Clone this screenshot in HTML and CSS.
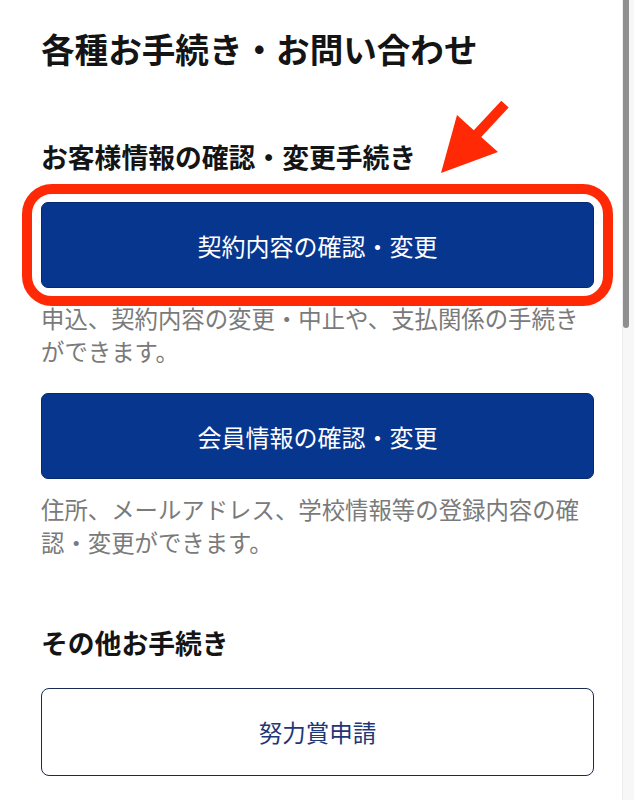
FILE: index.html
```html
<!DOCTYPE html>
<html lang="ja">
<head>
<meta charset="utf-8">
<title>各種お手続き・お問い合わせ</title>
<link rel="stylesheet" href="styles.css">
</head>
<body>
<div class="page">
  <main class="content">
    <h1 class="title">各種お手続き・お問い合わせ</h1>

    <section class="group">
      <h2 class="heading">お客様情報の確認・変更手続き</h2>
      <div class="item">
        <a class="btn btn-primary btn-marked" href="#">契約内容の確認・変更
          <svg class="arrow" width="90" height="100" viewBox="0 0 90 100" aria-hidden="true">
            <polygon points="0,72 16,14 32.8,29.2 60.3,-0.3 67.7,6.4 40.2,35.9 57,51" fill="#ff2a05"/>
          </svg>
        </a>
        <p class="desc">申込、契約内容の変更・中止や、支払関係の手続きができます。</p>
      </div>
      <div class="item">
        <a class="btn btn-primary" href="#">会員情報の確認・変更</a>
        <p class="desc">住所、メールアドレス、学校情報等の登録内容の確認・変更ができます。</p>
      </div>
    </section>

    <section class="group group-other">
      <h2 class="heading">その他お手続き</h2>
      <div class="item">
        <a class="btn btn-outline" href="#">努力賞申請</a>
      </div>
    </section>
  </main>
  <div class="scrollbar"><div class="thumb"></div></div>
</div>
</body>
</html>
```

FILE: styles.css
```css
html, body {
  margin: 0;
  padding: 0;
  height: 100%;
  overflow: hidden;
  background: #ffffff;
}

body {
  font-family: "Noto Sans CJK JP", "Noto Sans", sans-serif;
  color: #141414;
}

.page {
  display: flex;
  min-height: 800px;
}

.content {
  flex: 1;
  padding: 27px 28px 0 41px;
}

.title {
  margin: 0;
  font-size: 33.6px;
  line-height: 44px;
  font-weight: 700;
  letter-spacing: 0;
}

.group {
  display: flex;
  flex-direction: column;
}

.heading {
  margin: 68px 0 0;
  font-size: 26.8px;
  line-height: 36px;
  font-weight: 700;
}

.group-other .heading {
  margin-top: 66px;
}

.item {
  display: flex;
  flex-direction: column;
}

.group .item:first-of-type {
  margin-top: 27px;
}

.item + .item {
  margin-top: 25px;
}

.btn {
  position: relative;
  display: flex;
  align-items: center;
  justify-content: center;
  box-sizing: border-box;
  height: 86px;
  border-radius: 7px;
  font-size: 24px;
  text-decoration: none;
}

.btn-primary {
  background: #07368f;
  border: 1px solid #062a70;
  color: #ffffff;
}

.btn-outline {
  height: 88px;
  background: #ffffff;
  border: 1.5px solid #1b2a55;
  border-radius: 8px;
  color: #1e3778;
  font-size: 23.5px;
}

.btn-marked::after {
  content: "";
  position: absolute;
  left: -20px;
  right: -20px;
  top: -19px;
  bottom: -19px;
  border: 10px solid #ff2a05;
  border-radius: 30px;
  pointer-events: none;
}

.arrow {
  position: absolute;
  left: 399px;
  top: -102px;
  overflow: visible;
}

.desc {
  margin: 14px 0 0;
  font-size: 23.4px;
  line-height: 33px;
  color: #7a7a7a;
}

.scrollbar {
  width: 12px;
  flex: 0 0 12px;
  background: #f7f7f7;
  border-left: 1px solid #ececec;
  box-sizing: border-box;
}

.thumb {
  width: 6px;
  height: 328px;
  margin-left: 0;
  background: #8f8f8f;
  border-radius: 0 0 3px 3px;
}
```
